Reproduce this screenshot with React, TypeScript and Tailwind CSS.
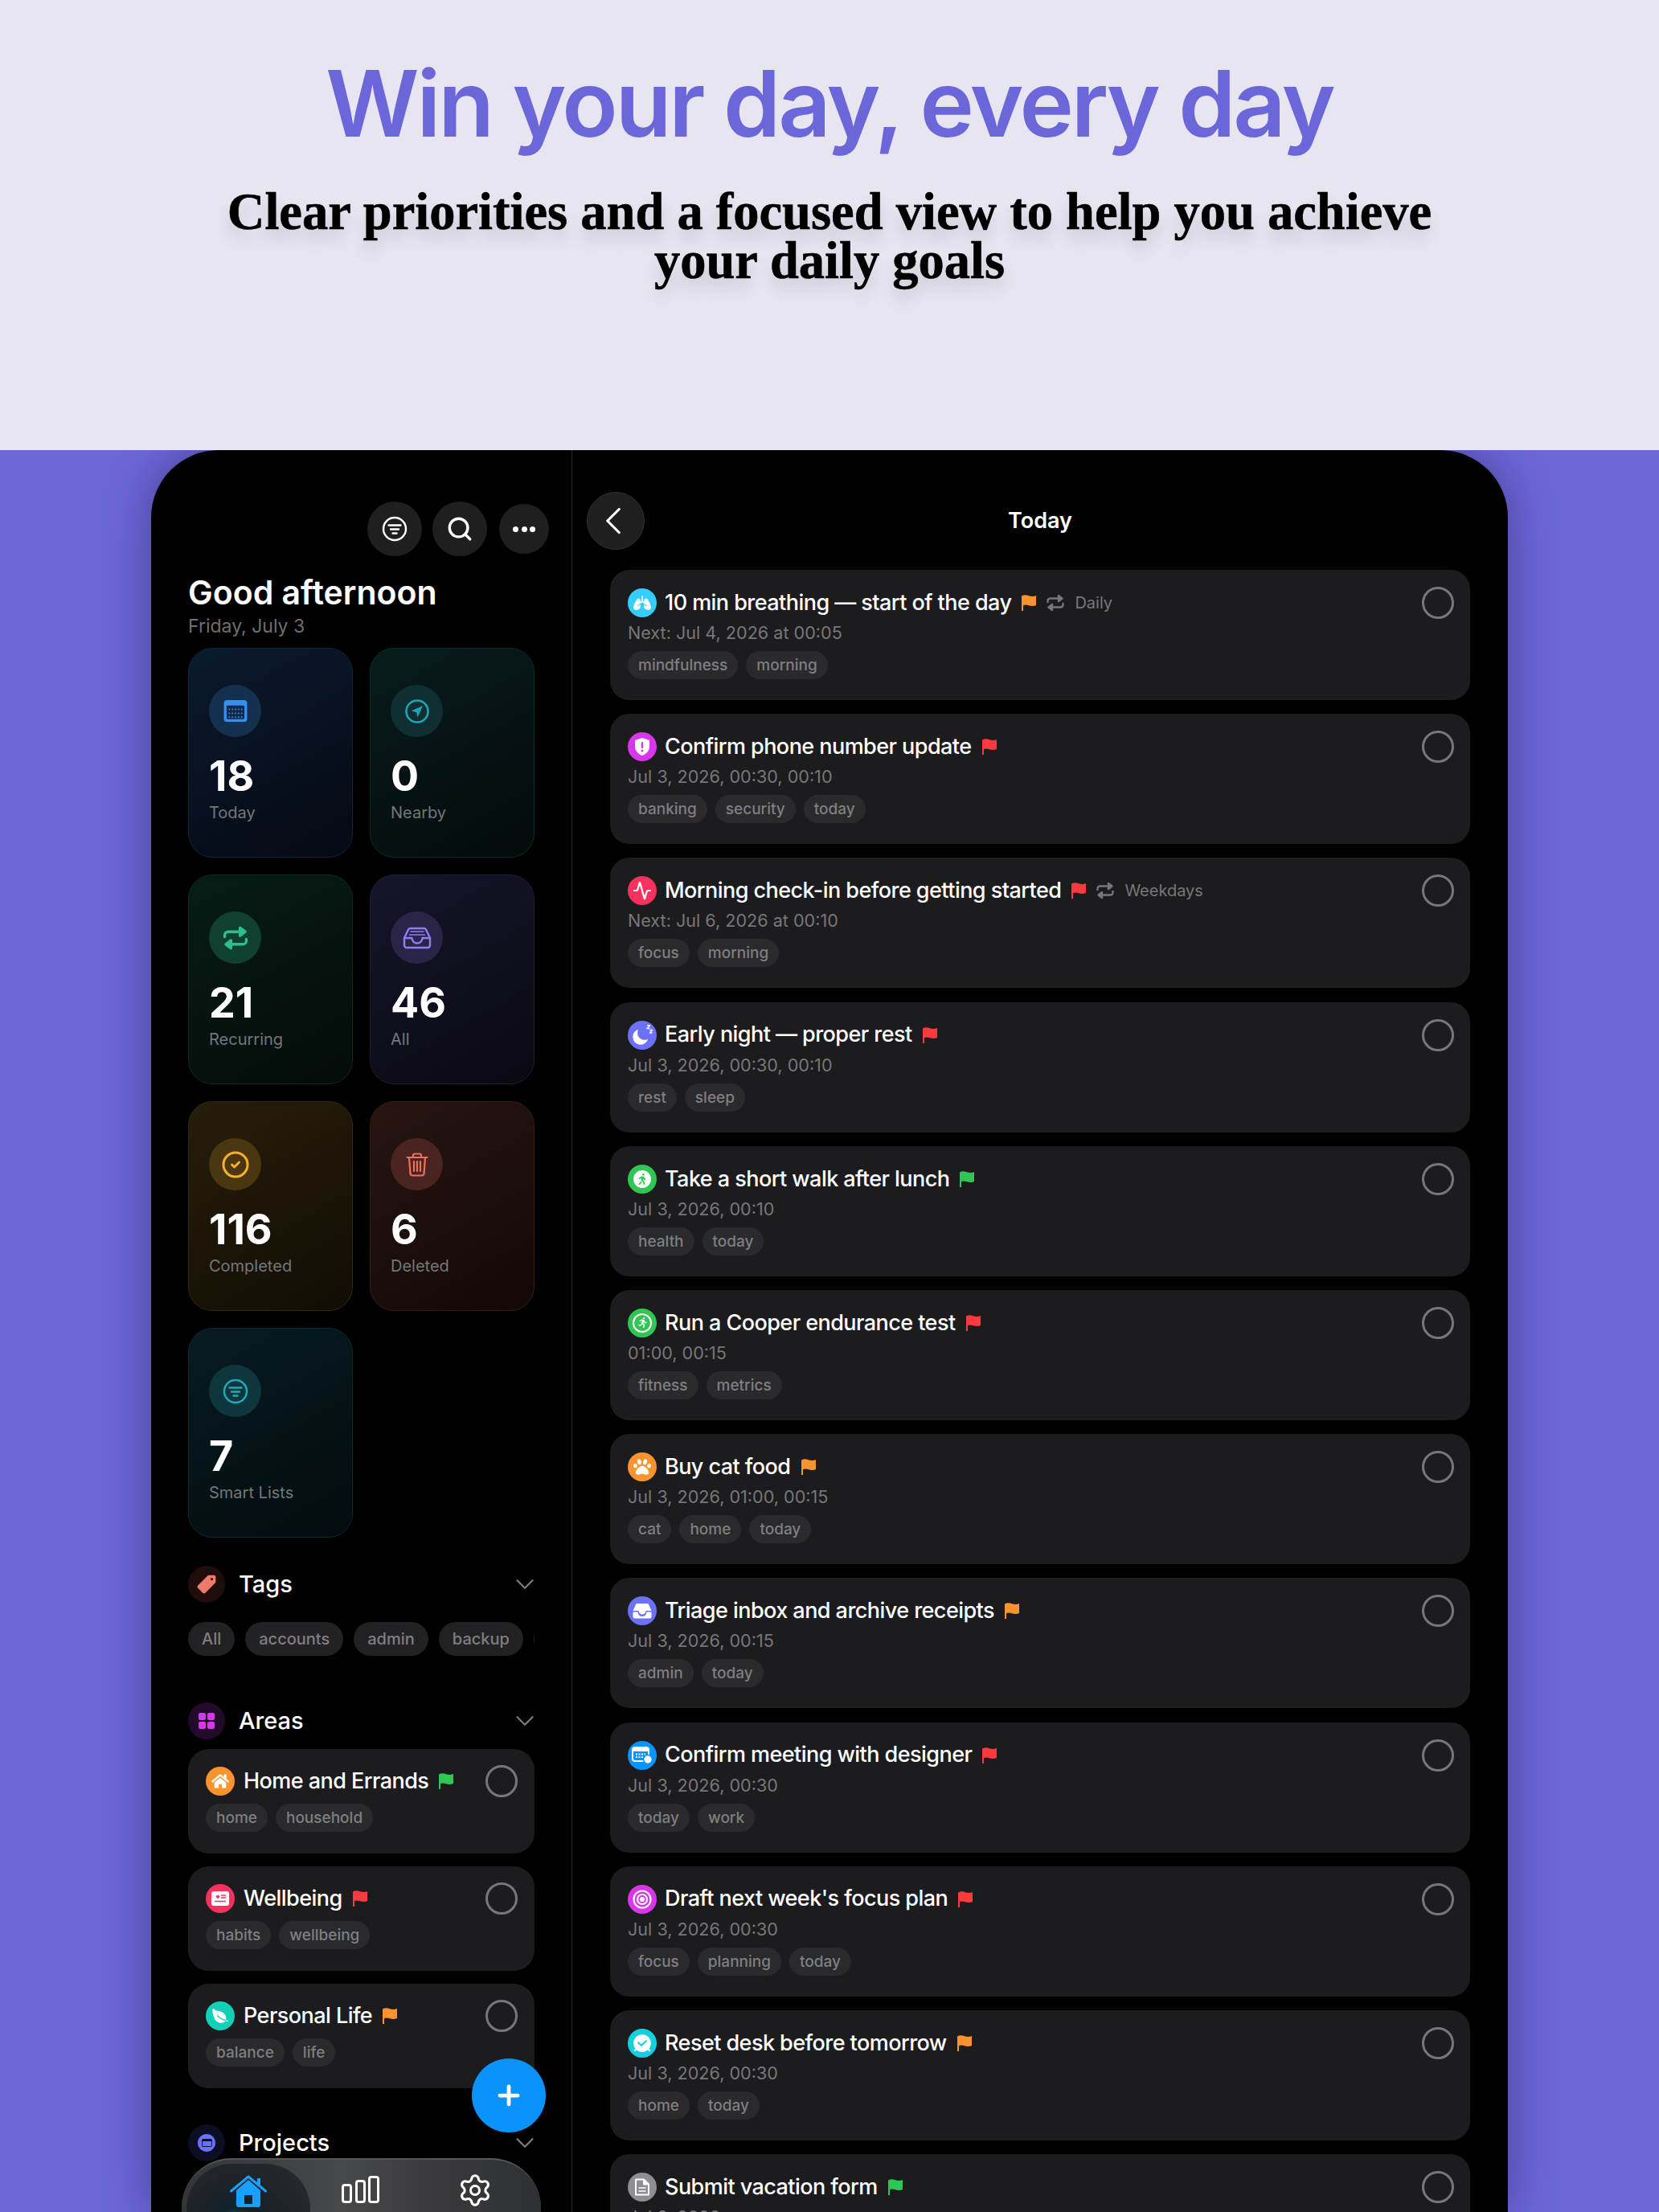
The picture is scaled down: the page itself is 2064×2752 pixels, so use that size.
import type { ReactNode } from "react";
import { ChevronDown, ChevronLeft, Plus, Search, Settings, Activity, CircleCheck } from "lucide-react";
import { FaHome, FaLungs, FaPaw, FaRunning, FaWalking } from "react-icons/fa";
import { IoLeaf, IoMoon, IoPricetag } from "react-icons/io5";

const RED = "#f93a3f";
const ORANGE = "#f8932e";
const GREEN = "#2fc653";

const Flag = ({ color }: { color: string }) => (
	<svg viewBox="0 0 18 20" className="w-[18px] h-[20px] shrink-0" fill={color}>
		<path d="M0 1.500C3-.2 6 .2 9 1.200s6 1 9-.2v12c-3 1.300-6 1.200-9 .2s-5.500-1-7 0V20H0z" />
	</svg>
);

const RepeatIcon = ({ className, color }: { className: string; color: string }) => (
	<svg viewBox="0 0 24 24" className={className} fill="none" stroke={color} strokeWidth="2.400" strokeLinecap="round" strokeLinejoin="round">
		<path d="M2.500 11V9.500A3 3 0 0 1 5.500 6.500H17" />
		<path d="M21.500 13v1.500a3 3 0 0 1-3 3H7" />
		<path d="M16 3l4.500 3.500L16 10z" fill={color} />
		<path d="M8 14l-4.500 3.500L8 21z" fill={color} />
	</svg>
);

const FilterCircle = ({ className, color }: { className: string; color: string }) => (
	<svg viewBox="0 0 32 32" className={className} fill="none" stroke={color} strokeWidth="2.400" strokeLinecap="round">
		<circle cx="16" cy="16" r="14" />
		<path d="M8.500 11.500h15M11 16.500h10M13.500 21.500h5" />
	</svg>
);

const CalendarIcon = () => (
	<svg viewBox="0 0 30 28" className="w-[30px] h-[27px]">
		<rect width="30" height="28" rx="4" fill="#3590f0" />
		<rect x="3.500" y="7" width="23" height="17.500" rx="1.500" fill="#12294a" />
		<g fill="#3590f0">
			{[12, 17, 22].flatMap((y) =>
				[7, 11, 15, 19, 23].map((x) => <circle key={`${x}-${y}`} cx={x} cy={y} r="1" />),
			)}
		</g>
	</svg>
);

const CompassIcon = () => (
	<svg viewBox="0 0 30 30" className="w-[30px] h-[30px]" fill="none">
		<circle cx="15" cy="15" r="13.500" stroke="#1fa5b5" strokeWidth="2.600" />
		<path d="M22 8L7.500 14.500l6.500 1.500 1.500 6.500z" fill="#1fa5b5" />
	</svg>
);

const TrayIcon = () => (
	<svg viewBox="0 0 36 28" className="w-[36px] h-[28px]" fill="none" stroke="#8d7ff0" strokeWidth="2.400" strokeLinejoin="round" strokeLinecap="round">
		<path d="M2 14L7 3.500A3 3 0 0 1 9.500 2h17A3 3 0 0 1 29 3.500L34 14v9a3 3 0 0 1-3 3H5a3 3 0 0 1-3-3z" />
		<path d="M2 14h9.500a6.500 6.500 0 0 0 13 0H34" />
		<path d="M10 6h16M8.500 10h19" strokeWidth="1.600" />
	</svg>
);

const TrashIcon = () => (
	<svg viewBox="0 0 28 30" className="w-[28px] h-[30px]" fill="none" stroke="#f0705f" strokeWidth="2.200" strokeLinecap="round" strokeLinejoin="round">
		<path d="M1.500 6h25M9 6V3.500A2 2 0 0 1 11 1.500h6a2 2 0 0 1 2 2V6" />
		<path d="M4 6l1.500 20a2.500 2.500 0 0 0 2.500 2.500h12a2.500 2.500 0 0 0 2.500-2.500L24 6" />
		<path d="M10 11v12M14 11v12M18 11v12" />
	</svg>
);

const summaryCards = [
	{ count: "18", label: "Today", box: "bg-[linear-gradient(150deg,#0b1a2e,#050913)] border-[#12233a]", dot: "bg-[#14304f]", icon: <CalendarIcon /> },
	{ count: "0", label: "Nearby", box: "bg-[linear-gradient(150deg,#091c1e,#030a0a)] border-[#0f2a2a]", dot: "bg-[#0f2f33]", icon: <CompassIcon /> },
	{ count: "21", label: "Recurring", box: "bg-[linear-gradient(150deg,#081c16,#030b09)] border-[#0f2a20]", dot: "bg-[#104030]", icon: <RepeatIcon className="w-[34px] h-[34px]" color="#2fbf8d" /> },
	{ count: "46", label: "All", box: "bg-[linear-gradient(150deg,#16152a,#0a0912)] border-[#1f1c34]", dot: "bg-[#2a2548]", icon: <TrayIcon /> },
	{ count: "116", label: "Completed", box: "bg-[linear-gradient(150deg,#261d0b,#120d03)] border-[#38290e]", dot: "bg-[#4a3610]", icon: <CircleCheck className="w-[36px] h-[36px] text-[#f5b227]" strokeWidth={2} /> },
	{ count: "6", label: "Deleted", box: "bg-[linear-gradient(150deg,#271511,#130807)] border-[#361e1a]", dot: "bg-[#4a2420]", icon: <TrashIcon /> },
	{ count: "7", label: "Smart Lists", box: "bg-[linear-gradient(150deg,#071c22,#030b0d)] border-[#0e2a30]", dot: "bg-[#0f363d]", icon: <FilterCircle className="w-[32px] h-[32px]" color="#21a9bd" /> },
];

const Badge = ({ color, children }: { color: string; children: ReactNode }) => (
	<div className={`w-[36px] h-[36px] shrink-0 rounded-full flex items-center justify-center text-white ${color}`}>
		{children}
	</div>
);

const Chip = ({ label }: { label: string }) => (
	<span className="h-[35px] px-[13px] rounded-full bg-[#2a2a2c] text-[#7f7f82] text-[19px] font-medium leading-[35px]">
		{label}
	</span>
);

const RoundCheck = () => (
	<div className="w-[40px] h-[40px] shrink-0 rounded-full border-[3px] border-[#77777a]" />
);

const ShieldGlyph = () => (
	<svg viewBox="0 0 20 22" className="w-[20px] h-[22px]">
		<path d="M10 0l9 3v8c0 5-4 9-9 11-5-2-9-6-9-11V3z" fill="#fff" />
		<rect x="8.800" y="5" width="2.400" height="8" rx="1.200" fill="#d935ea" />
		<circle cx="10" cy="16" r="1.500" fill="#d935ea" />
	</svg>
);

const MoonGlyph = () => (
	<div className="relative w-[26px] h-[26px]">
		<IoMoon className="absolute left-0 bottom-0 w-[21px] h-[21px]" />
		<svg viewBox="0 0 12 12" className="absolute right-0 top-0 w-[12px] h-[12px]" fill="none" stroke="#fff" strokeWidth="1.300" strokeLinejoin="round">
			<path d="M5 .7h3.500L5 4.500h3.500M8.500 6.500h3L8.500 10h3" />
		</svg>
	</div>
);

const TrayGlyph = () => (
	<svg viewBox="0 0 24 20" className="w-[24px] h-[20px]" fill="#fff">
		<path d="M4.500 1h15l4 9h-7a4.500 4.500 0 0 1-9 0h-7z" />
		<path d="M.500 11.500h6a5.500 5.500 0 0 0 11 0h6V17a2.500 2.500 0 0 1-2.500 2.500H3A2.500 2.500 0 0 1 .500 17z" />
	</svg>
);

const CalendarClockGlyph = () => (
	<svg viewBox="0 0 26 22" className="w-[26px] h-[22px]">
		<rect x="1" y="1" width="20" height="17" rx="3" fill="none" stroke="#fff" strokeWidth="2" />
		<rect x="1" y="1" width="20" height="5" rx="2" fill="#fff" />
		<path d="M5 9.500h12M5 13h9" stroke="#fff" strokeWidth="2" strokeDasharray="2 1.500" />
		<circle cx="20" cy="16" r="5.500" fill="#fff" stroke="#0a93fb" strokeWidth="1.500" />
	</svg>
);

const TargetGlyph = () => (
	<svg viewBox="0 0 24 24" className="w-[24px] h-[24px]" fill="none" stroke="#fff" strokeWidth="2.200">
		<circle cx="12" cy="12" r="10.500" />
		<circle cx="12" cy="12" r="6" />
		<circle cx="12" cy="12" r="2" fill="#fff" />
	</svg>
);

const AlarmGlyph = () => (
	<svg viewBox="0 0 24 24" className="w-[26px] h-[26px]">
		<circle cx="12" cy="12" r="10" fill="#fff" />
		<path d="M7.500 11.500l3.500 3 5.500-5" fill="none" stroke="#15cfe0" strokeWidth="2" strokeLinecap="round" />
		<path d="M3 21l2-2M21 21l-2-2" stroke="#fff" strokeWidth="2" />
	</svg>
);

const DocGlyph = () => (
	<svg viewBox="0 0 20 22" className="w-[20px] h-[22px]" fill="none" stroke="#fff" strokeWidth="2" strokeLinejoin="round">
		<path d="M2 1.500h10l6 6V20.500H2z" />
		<path d="M12 1.500v6h6" fill="#fff" />
		<path d="M5.500 12h9M5.500 16h9" strokeWidth="1.600" />
	</svg>
);

const HabitGlyph = () => (
	<svg viewBox="0 0 22 18" className="w-[22px] h-[18px]">
		<rect width="22" height="18" rx="3" fill="#fff" />
		<path d="M6 5.500c1-1 2 0 2 0s1-1 2 0 0 2.500-2 3.500c-2-1-3-2.500-2-3.500z" fill="#f8325f" />
		<path d="M4 12.500h14M12 5h6M12 8h6" stroke="#f8325f" strokeWidth="1.400" />
	</svg>
);

const tasks = [
	{ title: "10 min breathing — start of the day", flag: ORANGE, when: "Next: Jul 4, 2026 at 00:05", repeat: "Daily", tags: ["mindfulness", "morning"], color: "bg-[#35cdfb]", glyph: <FaLungs className="w-[22px] h-[22px]" /> },
	{ title: "Confirm phone number update", flag: RED, when: "Jul 3, 2026, 00:30, 00:10", tags: ["banking", "security", "today"], color: "bg-[#d935ea]", glyph: <ShieldGlyph /> },
	{ title: "Morning check-in before getting started", flag: RED, when: "Next: Jul 6, 2026 at 00:10", repeat: "Weekdays", tags: ["focus", "morning"], color: "bg-[#f8325f]", glyph: <Activity className="w-[24px] h-[24px]" strokeWidth={2.2} /> },
	{ title: "Early night — proper rest", flag: RED, when: "Jul 3, 2026, 00:30, 00:10", tags: ["rest", "sleep"], color: "bg-[#6c72f8]", glyph: <MoonGlyph /> },
	{ title: "Take a short walk after lunch", flag: GREEN, when: "Jul 3, 2026, 00:10", tags: ["health", "today"], color: "bg-[#2fc653]", glyph: <div className="w-[22px] h-[22px] rounded-full bg-white flex items-center justify-center"><FaWalking className="w-[14px] h-[14px] text-[#2fc653]" /></div> },
	{ title: "Run a Cooper endurance test", flag: RED, when: "01:00, 00:15", tags: ["fitness", "metrics"], color: "bg-[#2fc653]", glyph: <div className="w-[24px] h-[24px] rounded-full border-2 border-white flex items-center justify-center"><FaRunning className="w-[13px] h-[13px]" /></div> },
	{ title: "Buy cat food", flag: ORANGE, when: "Jul 3, 2026, 01:00, 00:15", tags: ["cat", "home", "today"], color: "bg-[#f8932e]", glyph: <FaPaw className="w-[22px] h-[22px]" /> },
	{ title: "Triage inbox and archive receipts", flag: ORANGE, when: "Jul 3, 2026, 00:15", tags: ["admin", "today"], color: "bg-[#6c72f8]", glyph: <TrayGlyph /> },
	{ title: "Confirm meeting with designer", flag: RED, when: "Jul 3, 2026, 00:30", tags: ["today", "work"], color: "bg-[#0a93fb]", glyph: <CalendarClockGlyph /> },
	{ title: "Draft next week's focus plan", flag: RED, when: "Jul 3, 2026, 00:30", tags: ["focus", "planning", "today"], color: "bg-[#d935ea]", glyph: <TargetGlyph /> },
	{ title: "Reset desk before tomorrow", flag: ORANGE, when: "Jul 3, 2026, 00:30", tags: ["home", "today"], color: "bg-[#15cfe0]", glyph: <AlarmGlyph /> },
	{ title: "Submit vacation form", flag: GREEN, when: "Jul 3, 2026", tags: ["today"], color: "bg-[#8e8e93]", glyph: <DocGlyph /> },
];

const areas = [
	{ title: "Home and Errands", flag: GREEN, tags: ["home", "household"], color: "bg-[#f8932e]", glyph: <FaHome className="w-[22px] h-[22px]" /> },
	{ title: "Wellbeing", flag: RED, tags: ["habits", "wellbeing"], color: "bg-[#f8325f]", glyph: <HabitGlyph /> },
	{ title: "Personal Life", flag: ORANGE, tags: ["balance", "life"], color: "bg-[#12cfb8]", glyph: <IoLeaf className="w-[22px] h-[22px]" /> },
];

const SectionHeader = ({ title, dot, icon }: { title: string; dot: string; icon: ReactNode }) => (
	<div className="flex items-center h-[46px]">
		<div className={`w-[46px] h-[46px] rounded-full flex items-center justify-center ${dot}`}>{icon}</div>
		<span className="ml-[17px] text-[29px] font-medium text-white">{title}</span>
		<ChevronDown className="ml-auto -mr-[7px] w-[38px] h-[38px] text-[#7a7a7a]" strokeWidth={1.5} />
	</div>
);

const TaskCard = ({ task }: { task: (typeof tasks)[number] }) => (
	<div className="h-[162px] shrink-0 rounded-[24px] bg-[#1c1c1e] pl-[22px] pr-[20px] pt-[21px]">
		<div className="flex items-center h-[40px]">
			<Badge color={task.color}>{task.glyph}</Badge>
			<span className="ml-[10px] text-[27px] font-medium text-white tracking-[-0.55px] whitespace-nowrap">{task.title}</span>
			<span className="ml-[13px]"><Flag color={task.flag} /></span>
			{task.repeat && (
				<>
					<RepeatIcon className="ml-[12px] w-[24px] h-[24px]" color="#77777a" />
					<span className="ml-[12px] text-[20px] text-[#77777a]">{task.repeat}</span>
				</>
			)}
			<span className="ml-auto"><RoundCheck /></span>
		</div>
		<div className="mt-[2px] text-[21.6px] leading-[30px] text-[#77777a]">{task.when}</div>
		<div className="mt-[8px] flex gap-[10px]">
			{task.tags.map((tag) => (
				<Chip key={tag} label={tag} />
			))}
		</div>
	</div>
);

const Sidebar = () => (
	<aside className="w-[524px] shrink-0 border-r border-[#2a2a2a] pl-[46px] pr-[46px] overflow-hidden">
		<div className="mt-[64px] flex items-center justify-end h-[68px] -mr-[18px]">
			<div className="w-[68px] h-[68px] rounded-full bg-[#1f1f1f] flex items-center justify-center">
				<FilterCircle className="w-[32px] h-[32px]" color="#fff" />
			</div>
			<div className="ml-[13px] w-[68px] h-[68px] rounded-full bg-[#1f1f1f] flex items-center justify-center">
				<Search className="w-[34px] h-[34px] text-white" strokeWidth={2.4} />
			</div>
			<div className="ml-[15px] w-[62px] h-[62px] rounded-full bg-[#1f1f1f] flex items-center justify-center gap-[3.5px]">
				<span className="w-[7px] h-[7px] rounded-full bg-white" />
				<span className="w-[7px] h-[7px] rounded-full bg-white" />
				<span className="w-[7px] h-[7px] rounded-full bg-white" />
			</div>
		</div>
		<h2 className="mt-[20px] text-[41px] leading-[50px] font-semibold text-white">Good afternoon</h2>
		<p className="mt-[2px] text-[23px] leading-[30px] text-[#6f6f6f]">Friday, July 3</p>
		<div className="mt-[12px] grid grid-cols-2 gap-[21px]">
			{summaryCards.map((card) => (
				<div key={card.label} className={`h-[261px] rounded-[30px] border pl-[25px] pt-[45px] ${card.box}`}>
					<div className={`w-[65px] h-[65px] rounded-full flex items-center justify-center ${card.dot}`}>{card.icon}</div>
					<div className="mt-[19px] text-[52px] leading-[60px] font-bold text-white">{card.count}</div>
					<div className="mt-[1px] text-[20px] leading-[28px] text-[#74777a]">{card.label}</div>
				</div>
			))}
		</div>
		<div className="mt-[35px]">
			<SectionHeader title="Tags" dot="bg-[#1f0d0b]" icon={<IoPricetag className="w-[26px] h-[26px] text-[#ef7a6a]" />} />
			<div className="mt-[24px] flex gap-[13px] overflow-hidden">
				{["All", "accounts", "admin", "backup", "today"].map((tag) => (
					<span key={tag} className="h-[42px] shrink-0 px-[17px] rounded-full bg-[#222224] text-[20px] font-medium leading-[42px] text-[#7f7f82]">
						{tag}
					</span>
				))}
			</div>
		</div>
		<div className="mt-[58px]">
			<SectionHeader
				title="Areas"
				dot="bg-[#220a2a]"
				icon={
					<div className="grid grid-cols-2 gap-[2px]">
						<span className="w-[9px] h-[9px] rounded-[2px] bg-[#d935ea]" />
						<span className="w-[9px] h-[9px] rounded-[2px] bg-[#d935ea]" />
						<span className="w-[9px] h-[9px] rounded-[2px] bg-[#d935ea]" />
						<span className="w-[9px] h-[9px] rounded-[2px] bg-[#d935ea]" />
					</div>
				}
			/>
			<div className="mt-[12px] flex flex-col gap-[16px]">
				{areas.map((area) => (
					<div key={area.title} className="h-[130px] rounded-[26px] bg-[#1c1c1e] pl-[22px] pr-[21px] pt-[20px]">
						<div className="flex items-center h-[40px]">
							<Badge color={area.color}>{area.glyph}</Badge>
							<span className="ml-[11px] text-[27px] font-medium text-white tracking-[-0.55px]">{area.title}</span>
							<span className="ml-[13px]"><Flag color={area.flag} /></span>
							<span className="ml-auto"><RoundCheck /></span>
						</div>
						<div className="mt-[8px] flex gap-[10px]">
							{area.tags.map((tag) => (
								<Chip key={tag} label={tag} />
							))}
						</div>
					</div>
				))}
			</div>
		</div>
		<div className="mt-[45px]">
			<SectionHeader
				title="Projects"
				dot="bg-[#0c0e24]"
				icon={
					<div className="w-[22px] h-[22px] rounded-full bg-[#6c72f8] flex items-center justify-center">
						<span className="w-[13px] h-[10px] rounded-[2px] border-t-[3px] border-x border-b border-[#0c0e24]" />
					</div>
				}
			/>
		</div>
	</aside>
);

const BottomTabs = () => (
	<div className="absolute left-[38px] top-[2125px] w-[447px] h-[140px] rounded-[62px] border-t-2 border-[#55575a] bg-[linear-gradient(90deg,#333538,#47484a_45%,#3a3a3c_70%,#2e3033)] overflow-hidden">
		<div className="absolute left-[6px] top-[5px] w-[154px] h-[130px] rounded-[56px] bg-[radial-gradient(circle_at_40%_62%,#0f5f5e,#12222a_22%,#1f2227_50%,#2a2c30)] flex justify-center pt-[14px]">
			<svg viewBox="0 0 46 40" className="w-[46px] h-[40px]" fill="#19a0ff">
				<path d="M8 19L23 6l15 13v18a3 3 0 0 1-3 3H11a3 3 0 0 1-3-3zM18 25v11h10V25z" fillRule="evenodd" />
				<path d="M1.500 20L23 2l21.500 18" fill="none" stroke="#19a0ff" strokeWidth="3" strokeLinecap="round" strokeLinejoin="round" />
				<rect x="34" y="4" width="4" height="10" />
			</svg>
		</div>
		<div className="absolute left-[199px] top-[20px] flex items-end gap-[3.5px]">
			<span className="w-[13px] h-[24px] rounded-[4px] border-[3px] border-white" />
			<span className="w-[13px] h-[29px] rounded-[4px] border-[3px] border-white" />
			<span className="w-[14px] h-[34px] rounded-[4px] border-[3px] border-white" />
		</div>
		<Settings className="absolute left-[343px] top-[16px] w-[44px] h-[44px] text-white" strokeWidth={1.7} />
	</div>
);

export default function App() {
	return (
		<div className="w-[2064px] h-[2752px] overflow-hidden flex flex-col font-['Inter',sans-serif]">
			<header className="h-[560px] shrink-0 bg-[#e6e5f0] flex flex-col items-center pt-[54px]">
				<h1 className="text-[114px] leading-[150px] font-semibold tracking-[-3.1px] text-[#6c66db]">Win your day, every day</h1>
				<p className="mt-[29px] w-[1600px] text-center font-['Liberation_Serif',serif] font-bold text-[64.5px] leading-[61px] text-black [-webkit-text-stroke:0.6px_black] [text-shadow:0_14px_20px_rgba(0,0,0,0.13)]">
					Clear priorities and a focused view to help you achieve
					<br />
					your daily goals
				</p>
			</header>
			<section className="flex-1 bg-[#6c66db] px-[188px] overflow-hidden">
				<div className="relative h-[2192px] rounded-t-[84px] bg-black flex overflow-hidden shadow-[0_0_60px_rgba(0,0,0,0.35)]">
					<Sidebar />
					<main className="flex-1 min-w-0 px-[47px]">
						<div className="mt-[52px] -ml-[29px] h-[72px] relative flex justify-center items-center">
							<div className="absolute left-0 w-[72px] h-[72px] rounded-full bg-[#1f1f1f] border border-[#333] flex items-center justify-center">
								<ChevronLeft className="-ml-[6px] w-[58px] h-[58px] text-white" strokeWidth={1.3} />
							</div>
							<span className="ml-[29px] text-[27px] font-semibold text-white">Today</span>
						</div>
						<div className="mt-[25px] flex flex-col gap-[17.2px]">
							{tasks.map((task) => (
								<TaskCard key={task.title} task={task} />
							))}
						</div>
					</main>
					<div className="absolute left-[399px] top-[2001px] w-[92px] h-[92px] rounded-full bg-[#0a93fb] flex items-center justify-center">
						<Plus className="w-[38px] h-[38px] text-white" strokeWidth={3} />
					</div>
					<BottomTabs />
				</div>
			</section>
		</div>
	);
}
